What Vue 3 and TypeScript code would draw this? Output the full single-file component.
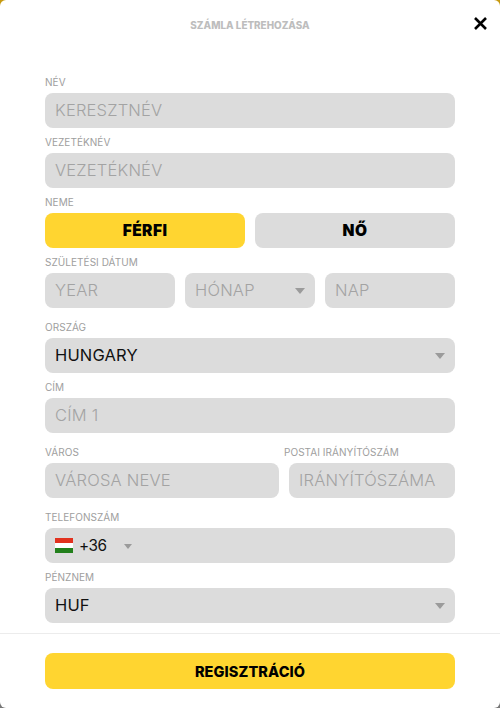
<script setup lang="ts">
interface Field { label: string; placeholder: string }
const topFields: Field[] = [
  { label: 'NÉV', placeholder: 'KERESZTNÉV' },
  { label: 'VEZETÉKNÉV', placeholder: 'VEZETÉKNÉV' },
]
</script>

<template>
  <div class="page">
    <div class="modal">
      <header class="head">
        <h1 class="title">SZÁMLA LÉTREHOZÁSA</h1>
        <button class="close" aria-label="Bezárás">
          <svg width="13" height="13" viewBox="0 0 13 13"><path d="M1 1 12 12M12 1 1 12" stroke="#000" stroke-width="2.6" fill="none" /></svg>
        </button>
      </header>

      <form class="form" @submit.prevent>
        <div v-for="f in topFields" :key="f.label" class="group">
          <div class="label">{{ f.label }}</div>
          <div class="box muted">{{ f.placeholder }}</div>
        </div>

        <div class="group">
          <div class="label">NEME</div>
          <div class="gender">
            <div class="choice active">FÉRFI</div>
            <div class="choice">NŐ</div>
          </div>
        </div>

        <div class="group">
          <div class="label">SZÜLETÉSI DÁTUM</div>
          <div class="dob">
            <div class="box muted">YEAR</div>
            <div class="box muted select">HÓNAP<i class="caret" /></div>
            <div class="box muted">NAP</div>
          </div>
        </div>

        <div class="group gap-lg">
          <div class="label">ORSZÁG</div>
          <div class="box select">HUNGARY<i class="caret" /></div>
        </div>

        <div class="group">
          <div class="label">CÍM</div>
          <div class="box muted">CÍM 1</div>
        </div>

        <div class="city gap-lg">
          <div class="group">
            <div class="label">VÁROS</div>
            <div class="box muted">VÁROSA NEVE</div>
          </div>
          <div class="group">
            <div class="label zip-label">POSTAI IRÁNYÍTÓSZÁM</div>
            <div class="box muted">IRÁNYÍTÓSZÁMA</div>
          </div>
        </div>

        <div class="group gap-lg">
          <div class="label">TELEFONSZÁM</div>
          <div class="box phone">
            <svg class="flag" width="18" height="15" viewBox="0 0 18 15">
              <rect width="18" height="5" fill="#e2321f" />
              <rect y="5" width="18" height="5" fill="#fff" />
              <rect y="10" width="18" height="5" fill="#23801c" />
            </svg>
            <span class="code">+36</span>
            <i class="caret small" />
          </div>
        </div>

        <div class="group">
          <div class="label">PÉNZNEM</div>
          <div class="box select">HUF<i class="caret" /></div>
        </div>
      </form>

      <footer class="foot">
        <button class="submit">REGISZTRÁCIÓ</button>
      </footer>
    </div>
  </div>
</template>

<style>
html, body { margin: 0; background: #777; }
</style>

<style scoped>
.page { width: 500px; height: 708px; overflow: hidden; background: linear-gradient(#c79a10 0 50%, #777 50%); }
.modal {
  width: 500px; height: 708px; background: #fff; border-radius: 6px;
  font-family: "Inter", "Liberation Sans", sans-serif; display: flex; flex-direction: column;
  box-sizing: border-box;
}
.head { height: 75px; position: relative; display: flex; justify-content: center; padding-top: 19px; box-sizing: border-box; }
.title { margin: 0; font-size: 9.9px; line-height: 13px; font-weight: 800; color: #bdbdbd; }
.close { position: absolute; right: 13px; top: 17px; padding: 0; border: 0; background: none; width: 13px; height: 13px; display: block; }
.close svg { display: block; }
.form { padding: 0 45px; display: flex; flex-direction: column; }
.group { display: flex; flex-direction: column; min-width: 0; }
.label { height: 18px; line-height: 15px; font-size: 10px; color: #9e9e9e; white-space: nowrap; letter-spacing: 0.05px; }
.box {
  height: 35px; border-radius: 8px; background: #dcdcdc; padding: 0 10px 2px; box-sizing: border-box;
  display: flex; align-items: center; font-size: 16.5px; font-weight: 400; letter-spacing: 0.15px; color: #111; position: relative; white-space: nowrap;
}
.muted { color: #a3a3a3; font-weight: 300; letter-spacing: 0.2px; }
.group + .group { margin-top: 7px; }
.city .group + .group { margin-top: 0; }
.group.gap-lg, .city.gap-lg { margin-top: 12px; }
.gender { display: grid; grid-template-columns: 200px 200px; gap: 10px; }
.choice { height: 35px; border-radius: 8px; background: #dcdcdc; display: flex; align-items: center; justify-content: center; font-size: 15.5px; font-weight: 900; letter-spacing: 0.45px; color: #000; padding-bottom: 1px; box-sizing: border-box; }
.choice.active { background: #ffd530; }
.dob { display: grid; grid-template-columns: repeat(3, 130px); gap: 10px; }
.city { display: grid; grid-template-columns: 234px 166px; gap: 10px; }
.zip-label { margin-left: -5px; }
.caret { position: absolute; right: 10px; top: 15px; width: 0; height: 0; border-left: 5px solid transparent; border-right: 5px solid transparent; border-top: 6px solid #9b9b9b; }
.phone { font-size: 15.3px; padding-bottom: 0; }
.flag { display: block; margin-right: 6px; }
.code { letter-spacing: -0.4px; font-weight: 400; }
.caret.small { left: 79px; right: auto; top: 16px; border-left-width: 4px; border-right-width: 4px; border-top-width: 5px; }
.foot { margin-top: 10px; border-top: 1px solid #ececec; padding: 19px 45px 0; }
.submit { width: 410px; height: 36px; border: 0; border-radius: 8px; background: #ffd530; color: #000; font: 800 14.5px "Inter", "Liberation Sans", sans-serif; letter-spacing: 0.1px; display: block; padding: 0; }
</style>
